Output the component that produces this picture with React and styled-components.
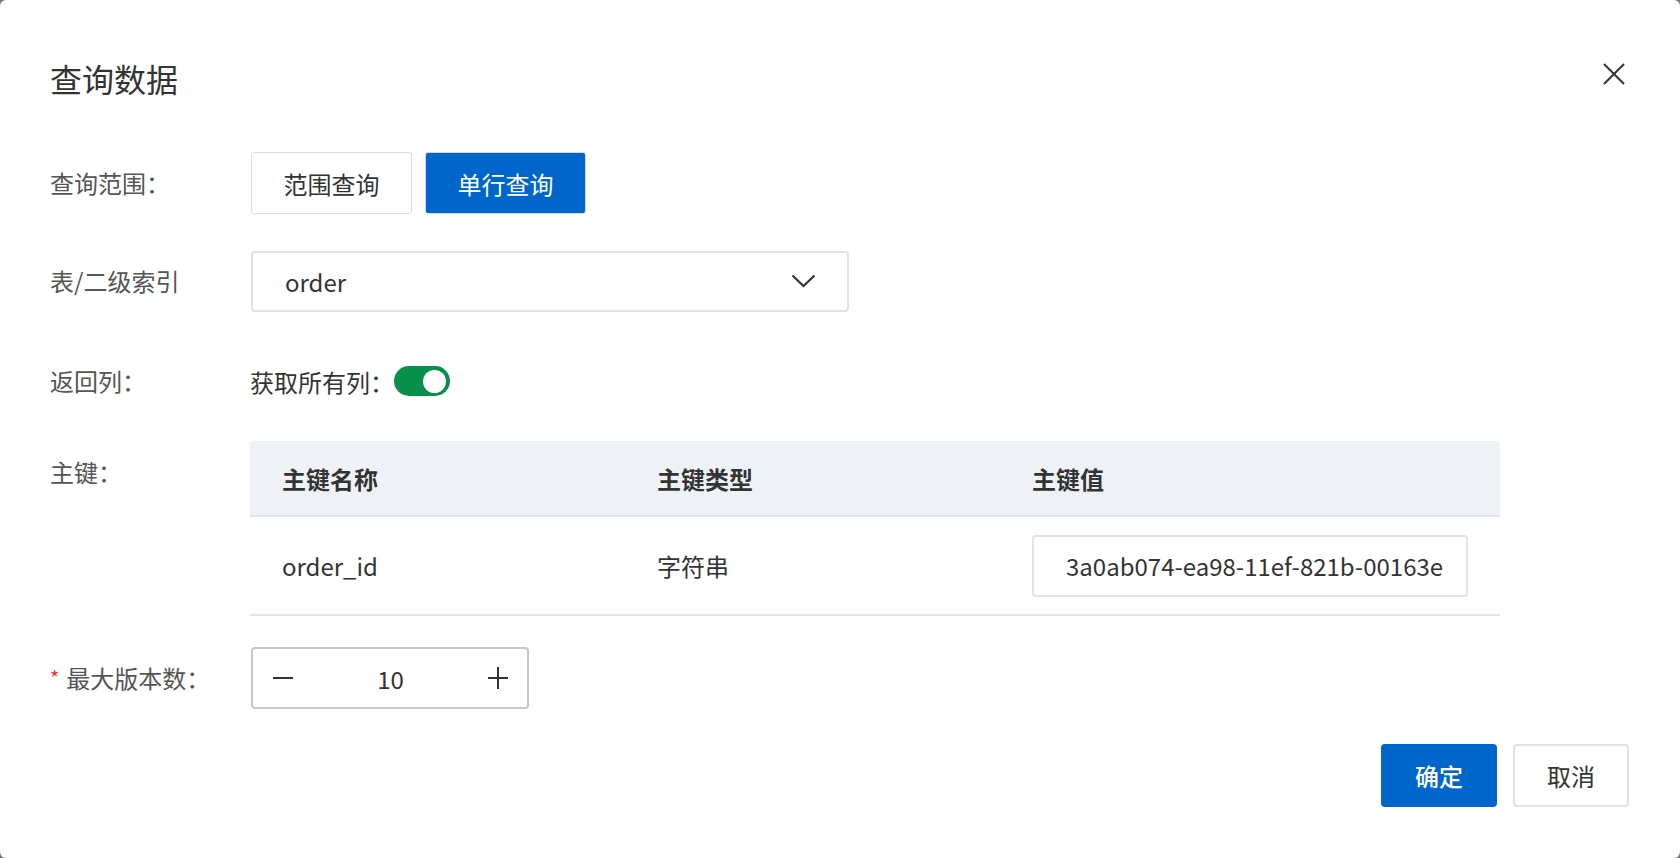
import styled, { createGlobalStyle } from "styled-components";

const GlobalStyle = createGlobalStyle`
  html, body, #root {
    margin: 0;
    padding: 0;
    height: 100%;
  }
  body {
    background: #737573;
    font-family: "Noto Sans CJK SC", "Noto Sans", sans-serif;
    color: #333;
  }
  * {
    box-sizing: border-box;
  }
`;

const keys = [{ name: "order_id", type: "字符串", value: "3a0ab074-ea98-11ef-821b-00163e" }];

export default function App() {
  return (
    <>
      <GlobalStyle />
      <Dialog>
        <Header>
          <Title>查询数据</Title>
          <CloseButton aria-label="关闭">
            <svg width="22" height="22" viewBox="0 0 22 22">
              <path d="M1 1L21 21M21 1L1 21" stroke="#333" strokeWidth="2" fill="none" />
            </svg>
          </CloseButton>
        </Header>

        <Row $gap={36}>
          <Label>查询范围：</Label>
          <Segment>
            <SegButton>范围查询</SegButton>
            <SegButton $active>单行查询</SegButton>
          </Segment>
        </Row>

        <Row $gap={38}>
          <Label>表/二级索引</Label>
          <Select>
            <span>order</span>
            <svg width="25" height="14" viewBox="0 0 25 14">
              <path d="M1.5 1.5L12.5 12L23.5 1.5" stroke="#333" strokeWidth="2.2" fill="none" />
            </svg>
          </Select>
        </Row>

        <Row $gap={29}>
          <Label>返回列：</Label>
          <SwitchText>获取所有列：</SwitchText>
          <Switch $on>
            <Knob />
          </Switch>
        </Row>

        <Row $gap={33} $top>
          <Label>主键：</Label>
          <Table>
            <HeadCell>主键名称</HeadCell>
            <HeadCell>主键类型</HeadCell>
            <HeadCell>主键值</HeadCell>
            {keys.map((k) => [
              <BodyCell key={k.name + "n"}>{k.name}</BodyCell>,
              <BodyCell key={k.name + "t"}>{k.type}</BodyCell>,
              <BodyCell key={k.name + "v"}>
                <ValueInput>{k.value}</ValueInput>
              </BodyCell>,
            ])}
          </Table>
        </Row>

        <Row $gap={35}>
          <Label>
            <Star>*</Star>最大版本数：
          </Label>
          <Stepper>
            <svg width="22" height="22" viewBox="0 0 22 22">
              <path d="M1 11H21" stroke="#333" strokeWidth="2" />
            </svg>
            <span>10</span>
            <svg width="22" height="22" viewBox="0 0 22 22">
              <path d="M1 11H21M11 0V22" stroke="#333" strokeWidth="2" />
            </svg>
          </Stepper>
        </Row>

        <Footer>
          <ActionButton $primary>确定</ActionButton>
          <ActionButton>取消</ActionButton>
        </Footer>
      </Dialog>
    </>
  );
}

const Dialog = styled.div`
  width: 1680px;
  height: 858px;
  background: #fff;
  border-radius: 6px;
  padding: 50px 51px 51px 50px;
  display: flex;
  flex-direction: column;
`;

const Header = styled.div`
  display: flex;
  justify-content: space-between;
  align-items: flex-start;
  height: 56px;
  margin-bottom: 46px;
`;

const Title = styled.h1`
  margin: 0;
  font-size: 32px;
  font-weight: 400;
  line-height: 56px;
  color: #333;
`;

const CloseButton = styled.button`
  width: 30px;
  height: 30px;
  margin-top: 9px;
  padding: 0;
  border: none;
  background: none;
  display: flex;
  align-items: center;
  justify-content: center;
`;

const Row = styled.div`
  display: flex;
  align-items: ${({ $top }) => ($top ? "flex-start" : "center")};
  margin-bottom: ${({ $gap }) => $gap}px;
  min-height: 62px;
`;

const Label = styled.div`
  width: 201px;
  flex-shrink: 0;
  font-size: 24px;
  line-height: 62px;
  color: #555;
  white-space: nowrap;
`;

const Star = styled.span`
  color: #e4393c;
  font-size: 20px;
  margin-right: 7px;
  vertical-align: 2px;
`;

const Segment = styled.div`
  display: flex;
  gap: 13px;
`;

const SegButton = styled.button`
  width: 161px;
  height: 62px;
  font-family: inherit;
  font-size: 24px;
  border-radius: 3px;
  border: 1px solid ${({ $active }) => ($active ? "#d5dbe3" : "#dcdcdc")};
  background: ${({ $active }) => ($active ? "#0066cc" : "#fff")};
  color: ${({ $active }) => ($active ? "#fff" : "#333")};
  box-shadow: ${({ $active }) => ($active ? "inset 0 0 0 1px #0066cc" : "none")};
`;

const Select = styled.div`
  width: 598px;
  height: 61px;
  border: 2px solid #e2e2e2;
  border-radius: 4px;
  display: flex;
  align-items: center;
  justify-content: space-between;
  padding: 0 31px 0 32px;
  font-size: 24px;
  color: #333;
`;

const SwitchText = styled.span`
  font-size: 24px;
  color: #333;
  margin-left: -1px;
`;

const Switch = styled.div`
  width: 56px;
  height: 30px;
  border-radius: 15px;
  background: ${({ $on }) => ($on ? "#08904b" : "#ccc")};
  display: flex;
  align-items: center;
  justify-content: ${({ $on }) => ($on ? "flex-end" : "flex-start")};
  padding: 0 4px;
`;

const Knob = styled.div`
  width: 23px;
  height: 23px;
  border-radius: 50%;
  background: #fff;
`;

const Table = styled.div`
  width: 1250px;
  margin-left: -1px;
  display: grid;
  grid-template-columns: 375px 375px minmax(0, 1fr);
  font-size: 24px;
  color: #333;
`;

const HeadCell = styled.div`
  height: 76px;
  padding: 0 32px;
  display: flex;
  align-items: center;
  background: #eef1f6;
  border-bottom: 2px solid #e0e3e8;
  font-weight: 700;
  &:first-child {
    border-top-left-radius: 4px;
  }
  &:nth-child(3) {
    border-top-right-radius: 4px;
  }
`;

const BodyCell = styled.div`
  height: 99px;
  padding: 0 32px;
  display: flex;
  align-items: center;
  border-bottom: 2px solid #e4e4e4;
  min-width: 0;
`;

const ValueInput = styled.div`
  width: 100%;
  height: 62px;
  border: 2px solid #e3e3e3;
  border-radius: 4px;
  display: flex;
  align-items: center;
  padding: 0 32px;
  white-space: nowrap;
  overflow: hidden;
  color: #333;
`;

const Stepper = styled.div`
  width: 278px;
  height: 62px;
  border: 2px solid #c4c8ce;
  border-radius: 4px;
  display: flex;
  align-items: center;
  justify-content: space-between;
  padding: 0 18px 0 19px;
  font-size: 24px;
  color: #333;
`;

const Footer = styled.div`
  display: flex;
  justify-content: flex-end;
  gap: 16px;
`;

const ActionButton = styled.button`
  width: 116px;
  height: 63px;
  font-family: inherit;
  font-size: 24px;
  font-weight: ${({ $primary }) => ($primary ? 500 : 400)};
  border-radius: 4px;
  border: ${({ $primary }) => ($primary ? "none" : "2px solid #e2e2e2")};
  background: ${({ $primary }) => ($primary ? "#0066cc" : "#fff")};
  color: ${({ $primary }) => ($primary ? "#fff" : "#333")};
`;
